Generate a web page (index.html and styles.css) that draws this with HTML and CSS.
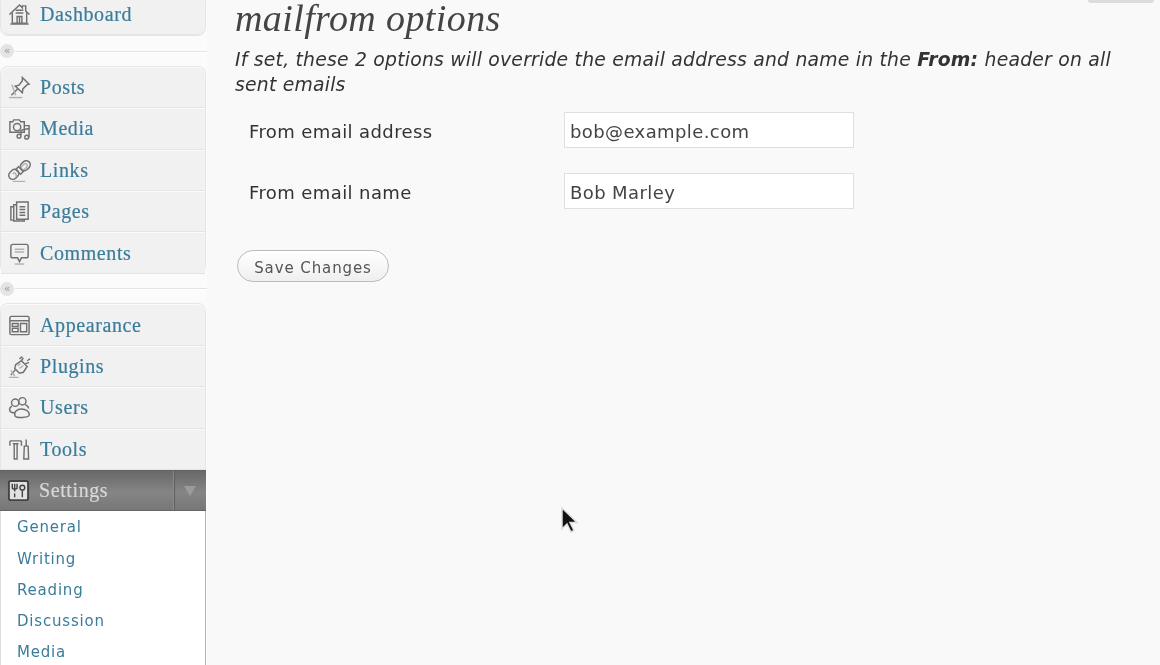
FILE: index.html
```html
<!DOCTYPE html>
<html lang="en">
<head>
<meta charset="utf-8">
<title>mailfrom options</title>
<link rel="stylesheet" href="styles.css">
</head>
<body>
<div class="page">
  <nav class="sidebar">
    <ul class="menu menu-top">
      <li class="item"><svg class="icon" viewBox="0 0 24 24"><path d="M1.500 12 12 2l3 3V3h3.500v5.500L22.500 12"/><path d="M4.500 10v11h15V10"/><path d="M2.500 22h19M9.500 21v-7h5v7M12 14v7M8 10.500h8M8 7.500h8" /></svg><a>Dashboard</a></li>
    </ul>
    <div class="sep"><span class="knob">«</span><span class="rule"></span></div>
    <ul class="menu">
      <li class="item"><svg class="icon" viewBox="0 0 24 24"><path d="M15 1.500l7 7-2 .5-4.500 4.500-.5 4L7.500 10.500l4-1L15 5z"/><path d="M10 13.500 3.500 20"/><path d="M4 9l4 11" class="soft"/><path d="M1 22.500h14" class="soft"/></svg><a>Posts</a></li>
      <li class="item"><svg class="icon" viewBox="0 0 24 24"><path d="M2 5h3l1-2h6l1 2h4v11H2z"/><circle cx="9.500" cy="10.500" r="3.800"/><path d="M17 9h5v12M13.500 19v-5l8-2"/><circle cx="11.500" cy="20" r="2"/><circle cx="19.500" cy="21" r="2"/></svg><a>Media</a></li>
      <li class="item"><svg class="icon" viewBox="0 0 24 24"><path d="M14 5l2-2a4 4 0 0 1 6 6l-2 2a4 4 0 0 1-6-6z"/><path d="M16.500 5.500l-2 2a2 2 0 0 0 3 3l2-2a2 2 0 0 0-3-3z" class="soft"/><path d="M8 11l3-3 5 5-3 3z"/><path d="M2 14l2-2a4 4 0 0 1 6 6l-2 2a4 4 0 0 1-6-6z"/><path d="M5 15.500a2 2 0 0 1 3 3" class="soft"/><path d="M5 23.500h13" class="soft"/></svg><a>Links</a></li>
      <li class="item"><svg class="icon" viewBox="0 0 24 24"><path d="M9 2h12v18H9z"/><path d="M9 5H6v17h11v-2M6 7H3v14h3"/><path d="M12 7h6M12 10h6M12 13h6M12 16h6"/></svg><a>Pages</a></li>
      <li class="item"><svg class="icon" viewBox="0 0 24 24"><path d="M5 2.500h14a2 2 0 0 1 2 2v10a2 2 0 0 1-2 2h-5l-2 4-2-4H5a2 2 0 0 1-2-2v-10a2 2 0 0 1 2-2z"/><path d="M7 7.500h10M7 10.500h10" class="soft"/><path d="M7 23h10" class="soft"/></svg><a>Comments</a></li>
    </ul>
    <div class="sep"><span class="knob">«</span><span class="rule"></span></div>
    <ul class="menu">
      <li class="item"><svg class="icon" viewBox="0 0 24 24"><rect x="2" y="2.500" width="20" height="19" rx="1.500"/><path d="M2 7h20"/><path d="M4.500 10h6v3h-6zM4.500 15h6v3.500h-6zM13 10h6.500v8.500H13z"/></svg><a>Appearance</a></li>
      <li class="item"><svg class="icon" viewBox="0 0 24 24"><path d="M8 10l6-4 6 6-4 6-4 1-5-5z"/><path d="M12 4l3-2.500M16 3l-2 3M20 6l3-2M18 9l4-1M8 15l-5 6"/><path d="M10 11l3-2M12 14l4-3" class="soft"/><path d="M3 16l4 6M1 23.500h10" class="soft"/></svg><a>Plugins</a></li>
      <li class="item"><svg class="icon" viewBox="0 0 24 24"><circle cx="7.500" cy="7" r="3.800"/><circle cx="15" cy="5.500" r="3.800"/><path d="M4 10.500c-3.500 2-3 6.500 1 7h2M18 9c2 1 3.500 2.500 3.500 4"/><path d="M7.500 21c-2-4.500 2-7.500 6.500-7.500s9 3 8 6.500c-1 2.500-13 3.500-14.500 1z"/></svg><a>Users</a></li>
      <li class="item"><svg class="icon" viewBox="0 0 24 24"><path d="M2 3h12M2 3v5M14 3v5M5 6h6M6.500 6v16h3V6"/><path d="M19 1.500v7M17 8.500h4l.5 13.500h-5z"/></svg><a>Tools</a></li>
      <li class="item item-current"><svg class="icon icon-current" viewBox="0 0 24 24"><rect x="2" y="2" width="20" height="20" rx="2" class="panel"/><path d="M8 5v8M5.500 5v4c0 2 5 2 5 0V5M8 15v4" class="mark"/><circle cx="16" cy="9" r="2.500" class="mark"/><path d="M16 12v7" class="mark"/></svg><a>Settings</a><span class="toggle"><i class="arrow"></i></span></li>
      <li class="submenu">
        <a>General</a>
        <a>Writing</a>
        <a>Reading</a>
        <a>Discussion</a>
        <a>Media</a>
      </li>
    </ul>
  </nav>
  <main class="content">
    <span class="screen-tab"></span>
    <h2 class="title">mailfrom options</h2>
    <p class="intro">If set, these 2 options will override the email address and name in the <b>From:</b> header on all sent emails</p>
    <form class="fields">
      <label class="field-label" for="addr">From email address</label>
      <input class="field-input" id="addr" type="text" value="bob@example.com">
      <label class="field-label" for="name">From email name</label>
      <input class="field-input" id="name" type="text" value="Bob Marley">
    </form>
    <button class="save" type="button">Save Changes</button>
    <svg class="cursor" viewBox="0 0 20 28"><path d="M2 2v21l5-5 4 8 3-1.500-4-8h7z"/></svg>
  </main>
</div>
</body>
</html>
```
FILE: styles.css
```css
* { box-sizing: border-box; }
html, body { margin: 0; height: 665px; overflow: hidden; }
body { background: #f9f9f9; font-family: "DejaVu Sans", sans-serif; color: #333; }
.page { display: flex; height: 665px; overflow: hidden; filter: blur(.45px); }
.sidebar { width: 207px; flex: none; background: #fbfbfb; margin-top: -7px; }
.menu { list-style: none; margin: 0; padding: 0; border: 1px solid #e6e6e6; border-bottom: 0; border-radius: 8px; width: 206px; }
.menu-top { border-bottom: 1px solid #e6e6e6; }
.item { display: flex; align-items: center; height: 41.400px; padding-left: 7px; background: #f1f1f1; border-bottom: 1px solid #e4e4e4; border-top: 1px solid #fafafa; font-family: "Liberation Serif", serif; font-size: 20px; color: #3a7c9c; }
.menu .item:first-child { border-radius: 8px 8px 0 0; }
.menu-top .item:first-child { border-radius: 8px; }
.item a { margin-left: 9px; letter-spacing: .6px; -webkit-text-stroke: .2px currentColor; }
.icon { width: 23px; height: 23px; flex: none; fill: none; stroke: #707070; stroke-width: 1.500; }
.icon .soft { stroke: #b0b0b0; }
.sep { display: flex; align-items: center; height: 29.500px; }
.knob { width: 14px; height: 14px; border-radius: 50%; background: #e4e4e4; color: #999; font: 11px/13px "DejaVu Sans", sans-serif; text-align: center; flex: none; }
.rule { flex: 1; height: 1px; margin-left: 1px; background: #e3e3e3; box-shadow: 0 1px 0 #fff; }
.item-current { position: relative; margin: 0 -1px; width: 206px; background: linear-gradient(#686868, #858585 55%, #777); border-color: #666; color: #d8d8d8; }
.icon-current { stroke: #444; }
.icon-current .panel { fill: #e2e2e2; stroke: #444; stroke-width: 2; }
.toggle { margin-left: auto; width: 33px; align-self: stretch; border-left: 1px solid #8a8a8a; box-shadow: inset 1px 0 0 #5f5f5f; display: flex; align-items: center; justify-content: center; }
.arrow { width: 0; height: 0; border: 6px solid transparent; border-top: 10px solid #9b9b9b; border-bottom: 0; }
.submenu { background: #fff; border-left: 1px solid #ddd; border-right: 1px solid #b5b5b5; margin: 0 -1px; padding: 1px 0 0 16px; display: flex; flex-direction: column; height: 160px; }
.submenu a { height: 31.300px; line-height: 31px; font-size: 15px; letter-spacing: .8px; color: #3a7c9c; }
.content { position: relative; flex: 1; padding-left: 28px; }
.screen-tab { position: absolute; top: 0; right: 6px; width: 66px; height: 3px; background: #dcdcdc; border-radius: 0 0 3px 3px; }
.title { margin: 0; font: italic 400 38px/36px "Liberation Serif", serif; color: #444; letter-spacing: .4px; }
.intro { margin: 11px 0 0; width: 890px; font-style: italic; font-size: 18.800px; line-height: 25px; letter-spacing: .22px; color: #333; }
.fields { display: grid; grid-template-columns: 315px 290px; grid-auto-rows: 36px; row-gap: 25px; align-items: center; margin: 15px 0 0 14px; }
.field-label { padding-top: 3px; font-size: 18px; letter-spacing: .4px; color: #333; }
.field-input { height: 36px; width: 290px; padding: 2px 5px 0; background: #fff; border: 1px solid #dfdfdf; font: 18px "DejaVu Sans", sans-serif; letter-spacing: .4px; color: #444; outline: 0; }
.save { display: block; margin: 41px 0 0 2px; width: 152px; height: 32px; border: 1px solid #bbb; border-radius: 16px; background: linear-gradient(#fff, #efefef); padding: 3px 0 0; font: 15px "DejaVu Sans", sans-serif; letter-spacing: .9px; color: #555; }
.cursor { position: absolute; left: 353px; top: 506px; width: 20px; height: 28px; fill: #111; stroke: #ddd; stroke-width: 1.500; }
```
